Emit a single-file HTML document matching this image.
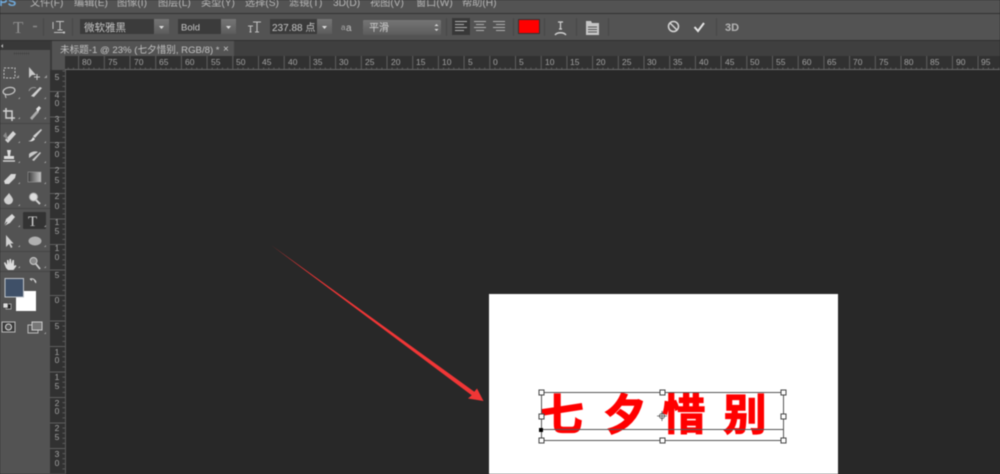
<!DOCTYPE html>
<html><head><meta charset="utf-8"><style>
html,body{margin:0;padding:0;background:#282828;width:1000px;height:474px;overflow:hidden}
svg{display:block;filter:blur(.5px)}
text{font-family:"Liberation Sans","Noto Sans CJK SC",sans-serif}
</style></head><body>
<svg xmlns="http://www.w3.org/2000/svg" width="1000" height="474" viewBox="0 0 1000 474">
<defs>
<linearGradient id="b" x1="0" y1="0" x2="0" y2="1"><stop offset="0" stop-color="#757575"/><stop offset="1" stop-color="#5c5c5c"/></linearGradient>
<linearGradient id="g" x1="0" y1="0" x2="1" y2="0"><stop offset="0" stop-color="#3a3a3a"/><stop offset="1" stop-color="#c8c8c8"/></linearGradient>
<pattern id="hr" patternUnits="userSpaceOnUse" x="1" y="56" width="25.7" height="14">
<rect x="0" y="0" width="1" height="14" fill="#5e5e5e"/>
<rect x="5.1" y="11.500" width="1" height="2.500" fill="#5c5c5c"/><rect x="10.3" y="11.500" width="1" height="2.500" fill="#5c5c5c"/><rect x="15.4" y="11.500" width="1" height="2.500" fill="#5c5c5c"/><rect x="20.6" y="11.500" width="1" height="2.500" fill="#5c5c5c"/>
</pattern>
<pattern id="vr" patternUnits="userSpaceOnUse" x="50" y="14.5" width="15" height="25.5">
<rect x="0" y="0" width="15" height="1" fill="#5e5e5e"/>
<rect x="12.500" y="5.1" width="2.500" height="1" fill="#5c5c5c"/><rect x="12.500" y="10.2" width="2.500" height="1" fill="#5c5c5c"/><rect x="12.500" y="15.3" width="2.500" height="1" fill="#5c5c5c"/><rect x="12.500" y="20.4" width="2.500" height="1" fill="#5c5c5c"/>
</pattern>
</defs>

<!-- base panels -->
<rect width="1000" height="474" fill="#282828"/>
<rect width="1000" height="13" fill="#535353"/>
<rect y="13" width="1000" height="1" fill="#333"/>
<rect y="14" width="1000" height="26" fill="#535353"/>
<rect y="40" width="1000" height="1" fill="#303030"/>
<rect y="41" width="1000" height="15" fill="#3f3f3f"/>
<rect y="41" width="50" height="433" fill="#535353"/>
<rect y="41" width="50" height="9" fill="#383838"/>
<rect x="50" y="41" width="2" height="433" fill="#3a3a3a"/>

<!-- menu -->
<g font-size="10.2" fill="#b8b8b8">
<text x="-1" y="6" font-size="13" font-weight="bold" fill="#6fa8d8">PS</text>
<text x="30" y="6">文件(F)</text><text x="74" y="6">编辑(E)</text><text x="117" y="6">图像(I)</text><text x="158" y="6">图层(L)</text><text x="201" y="6">类型(Y)</text><text x="245" y="6">选择(S)</text><text x="289" y="6">滤镜(T)</text><text x="333" y="6">3D(D)</text><text x="370" y="6">视图(V)</text><text x="416" y="6">窗口(W)</text><text x="462" y="6">帮助(H)</text>
</g>

<!-- options bar -->
<text x="13" y="33" font-size="17" fill="#8f8f8f" style="font-family:'Liberation Serif',serif">T</text>
<path d="M33 26.500h4" stroke="#8a8a8a" stroke-width="1.500"/>
<rect x="43" y="18" width="1" height="18" fill="#474747"/>
<g fill="none" stroke="#c0c0c0" stroke-width="1">
<path d="M56 21.500h8M60 21.500v8.500M57.500 30h5M53 22v7"/><path d="M54 32.500h9"/>
</g>
<rect x="63" y="31.500" width="2" height="2" fill="#c0c0c0"/>
<rect x="72" y="18" width="1" height="18" fill="#474747"/>

<rect x="80" y="19" width="74" height="15" fill="#3b3b3b"/><rect x="154" y="19" width="15" height="15" fill="url(#b)"/>
<text x="84" y="31" font-size="10.500" fill="#c6c6c6">微软雅黑</text>
<path d="M159 26h5l-2.500 3z" fill="#ddd"/>
<rect x="178" y="19" width="43" height="15" fill="#3b3b3b"/><rect x="221" y="19" width="15" height="15" fill="url(#b)"/>
<text x="181" y="30.500" font-size="9.500" fill="#c6c6c6">Bold</text>
<path d="M226 26h5l-2.500 3z" fill="#ddd"/>
<g fill="none" stroke="#c0c0c0" stroke-width="1.100"><path d="M253 22h8M257 22v10M255 32h4M248 26h5M250.500 26v6M249.500 32h2"/></g>
<rect x="270" y="19" width="47" height="15" fill="#3b3b3b"/><rect x="317" y="19" width="15" height="15" fill="url(#b)"/>
<text x="272" y="31" font-size="10" fill="#c6c6c6">237.88 点</text>
<path d="M322 26h5l-2.500 3z" fill="#ddd"/>
<text x="341" y="30" font-size="8" fill="#a8a8a8">a</text><text x="346" y="31" font-size="10" fill="#c0c0c0">a</text>
<rect x="363" y="20" width="78" height="15" rx="1" fill="url(#b)"/>
<text x="369" y="31" font-size="10" fill="#d0d0d0">平滑</text>
<path d="M434.500 26l2-2 2 2zM434.500 29l2 2 2-2z" fill="#ddd"/>
<rect x="446" y="18" width="1" height="18" fill="#474747"/>
<rect x="452" y="18" width="18" height="17" fill="#383838"/>
<g stroke="#b0b0b0" stroke-width="1">
<path d="M455 21.500h12M455 24.500h9M455 27.500h12M455 30.500h9"/>
<path d="M474 21.500h12M476 24.500h8M474 27.500h12M476 30.500h8"/>
<path d="M493 21.500h12M496 24.500h9M493 27.500h12M496 30.500h9"/>
</g>
<rect x="513" y="18" width="1" height="18" fill="#474747"/>
<rect x="518.500" y="19.500" width="21" height="14" fill="#ff0000" stroke="#333"/>
<rect x="544" y="18" width="1" height="18" fill="#474747"/>
<g fill="none" stroke="#d0d0d0" stroke-width="1.200"><path d="M558 22h5M560.500 22v7M559 29h3"/><path d="M555 35c2-3 9-3 11 0" stroke-width="1.400"/></g>
<rect x="576" y="18" width="1" height="18" fill="#474747"/>
<path d="M586 21h5l1 2h7v12h-13z" fill="#c6c6c6"/><path d="M588 27h9M588 29.500h9M588 32h9" stroke="#535353"/>
<rect x="608" y="18" width="1" height="18" fill="#474747"/>
<circle cx="673.500" cy="26.500" r="5" fill="none" stroke="#d4d4d4" stroke-width="1.500"/><path d="M670 23l7 7" stroke="#d4d4d4" stroke-width="1.500"/>
<path d="M694.500 27l3.500 4 6-8" fill="none" stroke="#e4e4e4" stroke-width="2"/>
<rect x="716" y="18" width="1" height="18" fill="#474747"/>
<text x="725" y="31" font-size="11" font-weight="bold" fill="#b4b4b4">3D</text>

<!-- tab -->
<rect x="52" y="41" width="182" height="15" fill="#535353"/>
<text x="60" y="53" font-size="9.600" fill="#c2c2c2">未标题-1 @ 23% (七夕惜别, RGB/8) *</text>
<text x="223" y="52" font-size="10" fill="#c8c8c8">×</text>

<!-- rulers -->
<rect x="65" y="56" width="935" height="14" fill="#313131"/>
<rect x="65" y="56" width="935" height="14" fill="url(#hr)"/>
<rect x="65" y="69" width="935" height="1" fill="#6a6a6a"/>
<rect x="50" y="70" width="15" height="404" fill="#313131"/>
<rect x="50" y="70" width="15" height="404" fill="url(#vr)"/>
<rect x="65" y="70" width="1" height="404" fill="#5a5a5a"/>
<rect x="52" y="56" width="13" height="14" fill="#535353"/>
<g font-size="8.500" fill="#a2a2a2">
<text x="82" y="65">80</text><text x="108" y="65">75</text><text x="134" y="65">70</text><text x="159" y="65">65</text><text x="185" y="65">60</text><text x="211" y="65">55</text><text x="236" y="65">50</text><text x="262" y="65">45</text><text x="288" y="65">40</text><text x="313" y="65">35</text><text x="339" y="65">30</text><text x="365" y="65">25</text><text x="391" y="65">20</text><text x="416" y="65">15</text><text x="442" y="65">10</text><text x="468" y="65">5</text><text x="493" y="65">0</text><text x="519" y="65">5</text><text x="545" y="65">10</text><text x="570" y="65">15</text><text x="596" y="65">20</text><text x="622" y="65">25</text><text x="647" y="65">30</text><text x="673" y="65">35</text><text x="699" y="65">40</text><text x="725" y="65">45</text><text x="750" y="65">50</text><text x="776" y="65">55</text><text x="802" y="65">60</text><text x="827" y="65">65</text><text x="853" y="65">70</text><text x="879" y="65">75</text><text x="904" y="65">80</text><text x="930" y="65">85</text><text x="956" y="65">90</text><text x="981" y="65">95</text>
</g>
<g font-size="8.500" fill="#a2a2a2" text-anchor="middle">
<text x="57" y="80">5</text>
<text x="57" y="98">4</text><text x="57" y="106">0</text>
<text x="57" y="122">3</text><text x="57" y="132">5</text>
<text x="57" y="148">3</text><text x="57" y="157">0</text>
<text x="57" y="173">2</text><text x="57" y="183">5</text>
<text x="57" y="199">2</text><text x="57" y="209">0</text>
<text x="57" y="225">1</text><text x="57" y="234">5</text>
<text x="57" y="251">1</text><text x="57" y="260">0</text>
<text x="57" y="278">5</text>
<text x="57" y="303">0</text>
<text x="57" y="329">5</text>
<text x="57" y="355">1</text><text x="57" y="363">0</text>
<text x="57" y="380">1</text><text x="57" y="389">5</text>
<text x="57" y="406">2</text><text x="57" y="414">0</text>
<text x="57" y="431">2</text><text x="57" y="440">5</text>
<text x="57" y="457">3</text><text x="57" y="466">0</text>
</g>

<!-- toolbar -->
<path d="M3 44l-2 2 2 2z" fill="#bbb"/>
<path d="M14 53.500h16" stroke="#3c3c3c" stroke-width="1.500" stroke-dasharray="1 1"/>
<g stroke="#464646"><path d="M0 123.500h50M0 208.500h50M0 251.500h50M0 271.500h50"/></g>
<rect x="4" y="68" width="11" height="10" fill="none" stroke="#c4c4c4" stroke-dasharray="2 1.500"/>
<path d="M29 67v11l3-3h4z" fill="#c8c8c8"/><path d="M37 74v6M34 77h6" stroke="#c8c8c8"/>
<ellipse cx="9" cy="91" rx="6" ry="3.500" transform="rotate(-12 9 91)" fill="none" stroke="#c8c8c8" stroke-width="1.200"/><path d="M5 94l1 4" stroke="#c8c8c8"/>
<path d="M29 91a5 5 0 0 1 7-3" fill="none" stroke="#999"/><path d="M31 96l9-9 2 1-8 9z" fill="#cfcfcf"/>
<path d="M6 108v10h9M3 111h9v10" fill="none" stroke="#d0d0d0" stroke-width="1.500"/>
<path d="M30 118l7-8 2 2-7 8z" fill="#aaa"/><path d="M36 109l3-3 2 2-3 4z" fill="#e0e0e0"/>
<path d="M5 140l8-9 3 3-8 9z" fill="#d4d4d4"/><path d="M3 136l3-4 2 8z" fill="#888"/>
<path d="M33 136l8-7 1 1-7 8z" fill="#d0d0d0"/><path d="M28 141c3 0 4-2 5-4l2 2c-1 2-4 3-7 2z" fill="#e0e0e0"/>
<path d="M7 150h4l-1 6h4v3H4v-3h4z" fill="#dcdcdc"/><path d="M3 161h12" stroke="#dcdcdc" stroke-width="1.300"/>
<path d="M29 154c3-3 7-3 9-2l-9 6zM32 160l8-8 1 1-7 8z" fill="#c8c8c8"/>
<path d="M4 181l7-7h5l-1 4-6 6H5z" fill="#d8d8d8"/>
<rect x="28" y="172" width="13" height="10" fill="url(#g)" stroke="#999" stroke-width=".6"/>
<path d="M9 193c2 3 4 5 4 7a4.500 4.500 0 0 1-9 0c0-2 3-4 5-7z" fill="#cfcfcf"/>
<circle cx="33.500" cy="197" r="4" fill="#ddd" stroke="#aaa"/><path d="M36 200l4 4" stroke="#cfcfcf" stroke-width="2"/>
<path d="M4 226l2-7 6-5 3 3-5 6z" fill="#d8d8d8"/><path d="M4 226l3-4" stroke="#535353"/>
<rect x="23" y="212" width="23" height="17" rx="1" fill="#333"/>
<text x="28" y="226" font-size="15" fill="#cfcfcf" style="font-family:'Liberation Serif',serif">T</text>
<path d="M6 235v12l3-3 2 4 1.500-1-2-3.500h3z" fill="#d0d0d0"/>
<ellipse cx="35" cy="241" rx="6.500" ry="4.500" fill="#b0b0b0"/>
<path d="M6 268l-2-5 1-1 2 3v-5h1.500l.5 4 .5-5h1.500l.5 5 1-4h1.500v6l1.500-1 1 1-3 4H8z" fill="#dcdcdc"/>
<circle cx="33.500" cy="261" r="3.500" fill="#8a8a8a" stroke="#ccc"/><path d="M36 264l4 5" stroke="#ccc" stroke-width="1.800"/>
<rect x="16" y="291" width="20" height="20" fill="#fff"/>
<rect x="5" y="278.500" width="18.500" height="18.500" fill="#3f5068" stroke="#bfc4ca"/>
<path d="M30 279c3-1 5 1 6 3M36 283l-1.500-2.500M30 279l2 1.500" fill="none" stroke="#d8d8d8"/>
<rect x="6" y="304" width="5" height="5" fill="#222" stroke="#ccc" stroke-width=".7"/><rect x="3" y="303" width="5" height="5" fill="#ddd" stroke="#333" stroke-width=".6"/>
<rect x="2" y="322" width="13" height="10" fill="#3a3a3a" stroke="#bbb"/><circle cx="8.500" cy="327" r="3" fill="#555" stroke="#ddd"/>
<rect x="28" y="325" width="10" height="8" fill="#535353" stroke="#bbb"/><rect x="32" y="322" width="10" height="8" fill="#777" stroke="#ccc"/>
<g fill="#9c9c9c">
<path d="M16 78h3v-3zM44 78h3v-3zM18 99h2v-2zM44 99h2v-2zM18 119h2v-2zM44 119h2v-2zM18 143h2v-2zM44 143h2v-2zM18 163h2v-2zM44 163h2v-2zM18 184h2v-2zM44 184h2v-2zM18 206h2v-2zM44 206h2v-2zM18 227h2v-2zM44 227h2v-2zM18 247h2v-2zM44 247h2v-2zM18 268h2v-2zM44 268h2v-2zM44 334h2v-2z"/>
</g>

<!-- arrow -->
<path d="M271 245L474.300 391.700L477 388.500L483.500 401L468 398.500L471.700 395.300Z" fill="#f03636"/>

<!-- document -->
<rect x="489" y="294" width="349" height="180" fill="#fff"/>
<g font-size="43" font-weight="bold" fill="#ff0000" stroke="#ff0000" stroke-width="1.300" text-anchor="middle">
<text x="562" y="430">七</text><text x="625" y="430">夕</text><text x="684" y="430">惜</text><text x="745" y="430">别</text>
</g>
<g fill="none" stroke="#555" stroke-width="1">
<rect x="541.500" y="392.500" width="242" height="48"/>
<path d="M541 429.500h243"/>
</g>
<g fill="#fff" stroke="#444" stroke-width="1">
<rect x="539" y="390" width="5" height="5"/><rect x="660" y="390" width="5" height="5"/><rect x="781" y="390" width="5" height="5"/>
<rect x="539" y="414" width="5" height="5"/><rect x="781" y="414" width="5" height="5"/>
<rect x="539" y="438" width="5" height="5"/><rect x="660" y="438" width="5" height="5"/><rect x="781" y="438" width="5" height="5"/>
</g>
<rect x="539" y="428" width="4" height="4" fill="#000"/>
<circle cx="662" cy="416" r="2.500" fill="#fff" stroke="#555"/><path d="M657 416h10M662 411v10" stroke="#555" stroke-width=".8"/>
</svg>
</body></html>
